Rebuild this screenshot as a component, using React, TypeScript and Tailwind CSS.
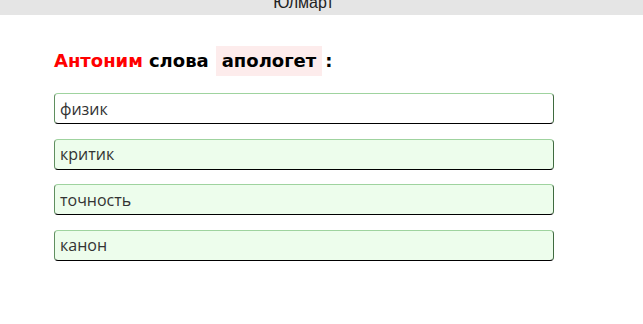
export default function App() {
  const options = [
    { text: "физик", bg: "bg-white" },
    { text: "критик", bg: "bg-[#edfdec]" },
    { text: "точность", bg: "bg-[#edfdec]" },
    { text: "канон", bg: "bg-[#edfdec]" },
  ]

  return (
    <div className="w-[643px] h-[324px] bg-white overflow-hidden">
      {/* top strip — title is cut off by the window edge */}
      <div className="h-[15px] bg-[#e5e5e5] overflow-hidden flex justify-center pr-[36px]">
        <span className="-mt-[7px] text-[16px] leading-[20px] text-[#222] font-['Liberation_Sans',Arial,sans-serif]">
          Юлмарт
        </span>
      </div>

      <div className="pl-[54px] pt-[31px]">
        <h2 className="flex items-center text-[18px] font-bold font-['DejaVu_Sans',Verdana,sans-serif] leading-[30px] text-black">
          <span className="text-[#ff0000]">Антоним</span>
          <span className="ml-[6px]">слова</span>
          <span className="ml-[7px] bg-[#fdecec] px-[6px]">апологет</span>
          <span className="ml-[3px]">:</span>
        </h2>

        <div className="mt-[17px] flex flex-col gap-[14.6px]">
          {options.map((o) => (
            <div
              key={o.text}
              className={`w-[500px] h-[31px] ${o.bg} rounded-[4px] border border-t-[#9fd39f] border-r-[#3f6b3f] border-b-black border-l-[#5f8f5f] flex items-center pl-[5px] text-[16px] text-[#333] font-['Open_Sans','Noto_Sans',sans-serif]`}
            >
              {o.text}
            </div>
          ))}
        </div>
      </div>
    </div>
  )
}
